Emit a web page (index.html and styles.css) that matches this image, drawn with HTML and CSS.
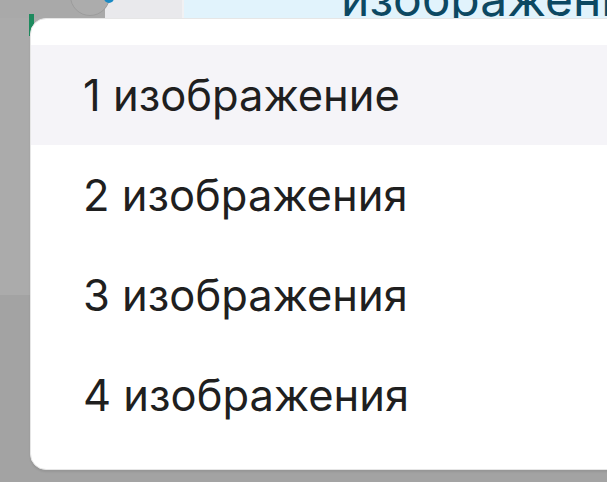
FILE: index.html
```html
<!DOCTYPE html>
<html lang="ru">
<head>
<meta charset="utf-8">
<link rel="stylesheet" href="styles.css">
</head>
<body>
<div class="page">
  <div class="topbar">
    <div class="strip"></div>
    <div class="avatar-zone">
      <div class="circle"><span class="dot"></span></div>
    </div>
    <div class="grayzone"></div>
    <div class="bluezone"><span class="bigtext">изображени</span></div>
  </div>
  <div class="backdrop-upper"></div>
  <div class="backdrop-lower"></div>
</div>
<div class="green"></div>
<div class="menu">
  <div class="item active">1 изображение</div>
  <div class="item">2 изображения</div>
  <div class="item">3 изображения</div>
  <div class="item">4 изображения</div>
</div>
</body>
</html>
```

FILE: styles.css
```css
html, body {
  margin: 0;
  padding: 0;
}
body {
  width: 607px;
  height: 482px;
  overflow: hidden;
  background: #a3a3a3;
  font-family: Inter, Roboto, sans-serif;
  position: relative;
}
.page {
  display: flex;
  flex-direction: column;
}
.topbar {
  display: flex;
  height: 18px;
  overflow: hidden;
}
.strip {
  width: 30px;
  background: #a9a9a9;
}
.avatar-zone {
  width: 75px;
  background: #a9a9a9;
  position: relative;
}
.green {
  position: absolute;
  left: 29px;
  top: 14px;
  width: 5px;
  height: 22px;
  background: #1e8a5e;
}
.circle {
  position: absolute;
  left: 40px;
  top: -24px;
  width: 38px;
  height: 38px;
  border-radius: 50%;
  border: 1px solid #9c9c9c;
  background: #acacac;
}
.dot {
  position: absolute;
  right: -5px;
  top: 16px;
  width: 10px;
  height: 10px;
  border-radius: 50%;
  background: #1a8ac4;
}
.grayzone {
  width: 77px;
  background: #e9e9ec;
  border-right: 2px solid #f1f1f3;
}
.bluezone {
  flex: 1;
  background: #e1f3fc;
  position: relative;
  overflow: hidden;
}
.bigtext {
  position: absolute;
  left: 157px;
  top: -31px;
  font-family: Inter, Roboto, sans-serif;
  font-size: 48px;
  color: #0c4862;
  white-space: nowrap;
}
.backdrop-upper {
  height: 277px;
  background: #ababab;
}
.backdrop-lower {
  height: 187px;
  background: #a3a3a3;
}
.menu {
  position: absolute;
  left: 30px;
  top: 18px;
  width: 600px;
  height: 452px;
  box-sizing: border-box;
  background: #fff;
  border: 1px solid #e6e6e6;
  border-radius: 16px;
  padding: 26px 0 0;
  box-shadow: 0 2px 2px rgba(0,0,0,0.08);
}
.item {
  height: 100px;
  display: flex;
  align-items: center;
  padding-left: 52px;
  font-size: 43.5px;
  color: #1f1f1f;
}
.item.active {
  background: #f5f4f8;
}
```
